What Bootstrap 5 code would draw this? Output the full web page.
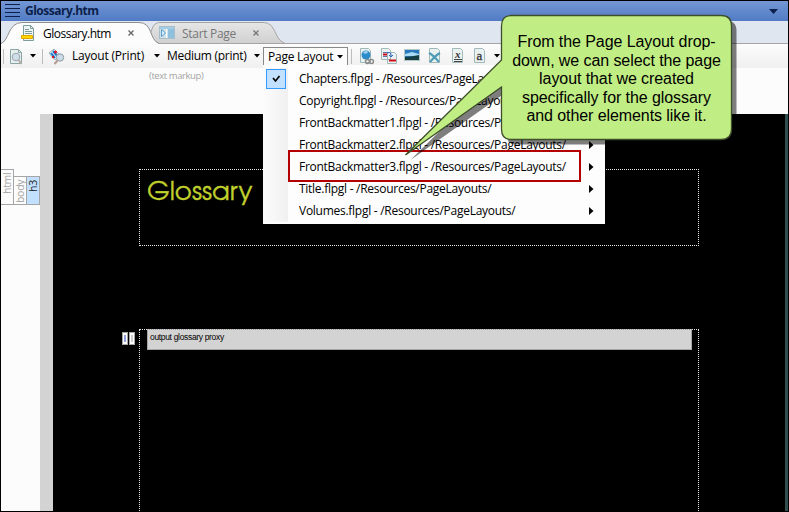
<!DOCTYPE html>
<html lang="en">
<head>
<meta charset="utf-8">
<meta name="viewport" content="width=device-width, initial-scale=1">
<title>Glossary.htm</title>
<link href="https://cdn.jsdelivr.net/npm/bootstrap@5.3.0/dist/css/bootstrap.min.css" rel="stylesheet">
<style>
body{width:789px;height:512px;overflow:hidden;font:12px/16px "Open Sans","Noto Sans",sans-serif;color:#000;background:#fcfcfc}
.app{width:789px;height:512px;border:1px solid #000}
svg{display:block;flex:none}
.t{white-space:nowrap;flex:none}
.titlebar{height:20px;background:linear-gradient(#7497d5,#507bc4);color:#0b1f4a;padding:0 10px 0 4px;font-weight:700}
.titlebar .t{margin-left:5px;letter-spacing:-.5px}
.tabs{height:23px;background:#dfe6f0;border-bottom:1px solid #a5a5a5}
.tabshape{left:0;top:0}
.doc-tab{height:23px}
.doc-tab .t{padding-top:2px}
.tab-a{width:150px;padding-left:20px}
.tab-a .t{margin-left:8px;letter-spacing:-.5px}
.tab-b{width:118px;padding-left:8px;color:#777}
.tab-b .t{margin-left:7px;letter-spacing:-.3px}
.tab-x{left:127px;top:9px}
.tab-b .tab-x{left:102px}
.toolbar{height:24px;background:linear-gradient(#fcfcfc,#f0f0f0);padding-left:2px;z-index:3}
.sep{width:1px;height:15px;background:#bdbdbd;flex:none}
.style-name{width:82px;margin-left:7px;letter-spacing:-.2px}
.medium-name{width:87px;margin-left:7px;letter-spacing:-.28px}
.drop{width:85px;height:21px;border:1px solid #888;border-bottom:0;background:#fcfcfc;margin-left:3px;padding-left:4px;margin-top:3px}
.drop .t{letter-spacing:-.25px;margin-top:-2px}
.drop svg{margin-top:-2px}
.layout-menu{left:262px;top:21px;width:342px;height:159px;background:#fdfdfd;padding:3px 0 0;z-index:2}
.gutter{width:25px;height:154px;background:linear-gradient(90deg,#fcfcfc,#f0f0f0)}
.item{height:22px;padding:0 11px}
.item .t{letter-spacing:-.27px}
.checkbox-on{left:3px;top:1px;width:20px;height:20px;background:#c2e0ff;border:1px solid #3399ff}
.pick{left:25px;top:85px;width:293px;height:32px;border:2px solid #b50000}
.callout{left:400px;top:-32px;z-index:5}
.callout-text{left:500px;top:-11px;width:231px;z-index:6;font:16px/18.5px "Liberation Sans",Arial,sans-serif;letter-spacing:-.08px;text-align:center}
.markup{height:46px;font-size:9.5px;letter-spacing:-.42px;color:#a4a4a4;padding-left:148px;line-height:15px}
.tags{width:39px;padding-top:55px}
.tag{writing-mode:vertical-rl;transform:rotate(180deg);border:1px solid #a5a5a5;color:#a4a4a4;font-size:10.5px;line-height:12px;width:14px;margin-right:-1px;text-align:right;padding-bottom:3px;letter-spacing:-.3px}
.tag-html{height:36px;margin-left:-1px;align-self:flex-start}
.tag-inner{height:29px}
.tag-on{background:#c2e0ff;color:#222}
.ruler{width:13px;background:#d3d3d3}
.paper{background:#000;border-right:3px solid #2f4f4f;padding-left:86px;height:397px}
.dotline{border:1px dotted #e8e8e8;width:560px}
.head-box{height:77px;margin-top:55px;padding:6px 0 0 7px;font:26px/34px "TeX Gyre Adventor","Century Gothic","Lato",sans-serif;color:#c0d02c;-webkit-text-stroke:.3px #c0d02c;overflow:hidden}
.out-box{height:190px;margin-top:83px;padding-left:7px;position:relative}
.proxy{width:545px;height:21px;margin-top:-1px;background:#d3d3d3;border:1px solid #a5a5a5;border-top:1px dotted #999;color:#000;font:8.5px/14px "Liberation Sans",sans-serif;letter-spacing:-.33px;padding-left:2px}
.mini{left:-18px;top:2px}
.mini span{width:6px;height:13px;background:#fff;border:1px solid #a5a5a5}
.mini i{display:block;width:2px;height:7px;margin:2px 1px;background:#91a0df}
.mini span+span{margin-left:1px}
.mini span+span i{background:#ccc}
</style>
<script src="https://cdn.jsdelivr.net/npm/bootstrap@5.3.0/dist/js/bootstrap.bundle.min.js"></script>
</head>
<body>
<div class="app d-flex flex-column overflow-hidden">
  <header class="titlebar d-flex align-items-center">
    <svg width="15" height="14"><path d="M0 .5h15M0 4.500h15M0 8.500h15M0 12.500h15" stroke="#0b1f4a"/></svg>
    <span class="t">Glossary.htm</span>
    <svg class="ms-auto" width="9" height="5"><path d="M0 0h9L4.500 5z" fill="#0b1f4a"/></svg>
  </header>

  <nav class="tabs d-flex position-relative">
    <svg class="tabshape position-absolute" width="290" height="23">
      <defs><linearGradient id="g" x1="0" x2="0" y1="0" y2="1"><stop stop-color="#e6e6e6"/><stop offset="1" stop-color="#cfcfcf"/></linearGradient></defs>
      <path d="M146 23L151 8Q153 1.500 159 1.500H262C276 1.500 272 18 284 22.500H150" fill="url(#g)" stroke="#a5a5a5"/>
      <path d="M0 22.500C8 20 7 1.500 21 1.500H138C152 1.500 148 19 158 22.500V24H0" fill="#fcfcfc" stroke="#8e8e8e"/>
    </svg>
    <div class="doc-tab tab-a d-flex align-items-center position-relative">
      <svg width="14" height="16"><path d="M2.500.5h7l3 3v12h-10z" fill="#eef4f4" stroke="#7d9c9c"/><path d="M9.500.5v3h3M4 4.500h4M4 6.500h7M4 8.500h7" fill="none" stroke="#7d9c9c"/><path d="M.5 10.500h11v3H.5z" fill="#ffd700" stroke="#e0a800"/></svg>
      <span class="t">Glossary.htm</span>
      <svg class="tab-x position-absolute" width="7" height="7"><path d="M.5.5l5 5M5.500.5l-5 5" stroke="#666" stroke-width="1.300"/></svg>
    </div>
    <div class="doc-tab tab-b d-flex align-items-center position-relative">
      <svg width="16" height="13"><rect x=".5" y=".5" width="15" height="12" fill="#cfe0e6" stroke="#a5c0cc"/><path d="M1 1h14v2H1z" fill="#a2cde4"/><path d="M9 3h6v9H9z" fill="#8fc1df"/><path d="M2.500 3.500l4 3.500-4 3.500z" fill="#d9efff" stroke="#5aa0cf"/><path d="M7.500 3v9" stroke="#fff"/></svg>
      <span class="t">Start Page</span>
      <svg class="tab-x position-absolute" width="7" height="7"><path d="M.5.5l5 5M5.500.5l-5 5" stroke="#777" stroke-width="1.300"/></svg>
    </div>
  </nav>

  <div class="toolbar d-flex align-items-center position-relative">
    <span class="sep"></span>
    <svg width="15" height="17" style="margin-left:5px"><path d="M1.500 1.500h8l3 3v11h-11z" fill="#e6eeee" stroke="#8aa5a5"/><path d="M9.500 1.500v3h3" fill="none" stroke="#8aa5a5"/><circle cx="7" cy="9" r="3.800" fill="#cfdeea" stroke="#9aa5ad"/><path d="M9.500 12l3 4" stroke="#b5aca6" stroke-width="2"/></svg>
    <svg width="6" height="4" style="margin-left:6px"><path d="M0 0h6L3 3.500z"/></svg>
    <span class="sep" style="margin-left:6px"></span>
    <svg width="17" height="17" style="margin-left:5px"><path d="M1 5l5-4 6 6-5 5z" fill="#e9f0f3" stroke="#9ab0b8"/><path d="M3 5l4 5M5 3l5 6" stroke="#117bd0" stroke-width="2"/><circle cx="7.500" cy="4" r="1.500" fill="#e0182b"/><circle cx="5" cy="9" r="1.200" fill="#e0182b"/><circle cx="12" cy="9.500" r="3.700" fill="#cbdce8" stroke="#919da5"/><path d="M9.500 12.500L6.500 16" stroke="#b59a91" stroke-width="2"/></svg>
    <span class="t style-name">Layout (Print)</span>
    <svg width="6" height="4"><path d="M0 0h6L3 3.500z"/></svg>
    <span class="t medium-name">Medium (print)</span>
    <svg width="6" height="4"><path d="M0 0h6L3 3.500z"/></svg>
    <div class="drop d-flex align-items-center flex-shrink-0">
      <span class="t">Page Layout</span>
      <svg width="6" height="4" class="ms-auto me-1"><path d="M0 0h6L3 3.500z"/></svg>
    </div>
    <span class="sep" style="margin-left:3px"></span>
    <svg width="142" height="20" style="margin-left:7px">
      <g fill="#e9f1f1" stroke="#a2b9b9"><path d="M1.500 2.500h8l2 2v12h-10zM22.500 2.500h7l2 2v9h-9zM28.500 6.500h7l2 2v9h-9zM70.500 2.500h8l2 2v12h-10zM93.500 2.500h8l2 2v12h-10zM115.500 2.500h8l2 2v12h-10z"/></g>
      <circle cx="7" cy="9" r="4.500" fill="#2c8bc9"/><path d="M4 7q3-4 5-1-1 3-5 1" fill="#9fd1ef"/>
      <g fill="none" stroke="#888" stroke-width="1.300"><circle cx="8.500" cy="15.500" r="2"/><circle cx="12.500" cy="15.500" r="2"/></g>
      <path d="M24 6.500h5M24 10.500h4" stroke="#5777aa"/><path d="M24 8.500h4M30 14.500h7" stroke="#d00d18" stroke-width="2"/><path d="M28 7q5-2 4 4m-2-2l2 2 2-2" fill="none" stroke="#3267cb"/>
      <rect x="45.500" y="3.500" width="15" height="11" fill="#2878be" stroke="#b5c7c7"/><path d="M46 8l7-2 7 2v2H46z" fill="#a8dcf4"/><path d="M46 11l6-.5 8-1.500v5H46z" fill="#173f43"/>
      <path d="M70 7q4 2 10 9M81 7q-4 2-10 9" stroke="#4e9bb6" stroke-width="2" fill="none"/>
      <path d="M95 13.500h8M95 15.500h8" stroke="#444"/>
      <g font-family="Liberation Serif" fill="#333"><text x="96" y="12" font-size="11" font-style="italic" font-weight="700">x</text><text x="117.500" y="14" font-size="13" stroke="#333" stroke-width=".3">a</text></g>
      <path d="M135 8h6l-3 3.500z"/>
    </svg>

    <div class="layout-menu position-absolute d-flex">
      <div class="gutter position-relative"><div class="checkbox-on position-absolute"><svg width="18" height="18"><path d="M6 8l2.500 3 4-5" fill="none" stroke="#000" stroke-width="1.700"/></svg></div></div>
      <div class="flex-grow-1">
        <div class="item d-flex align-items-center"><span class="t">Chapters.flpgl - /Resources/PageLayouts/</span></div>
        <div class="item d-flex align-items-center"><span class="t">Copyright.flpgl - /Resources/PageLayouts/</span></div>
        <div class="item d-flex align-items-center"><span class="t">FrontBackmatter1.flpgl - /Resources/PageLayouts/</span></div>
        <div class="item d-flex align-items-center"><span class="t">FrontBackmatter2.flpgl - /Resources/PageLayouts/</span><svg class="ms-auto" width="5" height="8"><path d="M0 0v8l4.500-4z"/></svg></div>
        <div class="item d-flex align-items-center"><span class="t">FrontBackmatter3.flpgl - /Resources/PageLayouts/</span><svg class="ms-auto" width="5" height="8"><path d="M0 0v8l4.500-4z"/></svg></div>
        <div class="item d-flex align-items-center"><span class="t">Title.flpgl - /Resources/PageLayouts/</span><svg class="ms-auto" width="5" height="8"><path d="M0 0v8l4.500-4z"/></svg></div>
        <div class="item d-flex align-items-center"><span class="t">Volumes.flpgl - /Resources/PageLayouts/</span><svg class="ms-auto" width="5" height="8"><path d="M0 0v8l4.500-4z"/></svg></div>
      </div>
      <div class="pick position-absolute"></div>
    </div>

    <svg class="callout position-absolute" width="345" height="160" viewBox="401 12 345 160">
      <defs><path id="bubble" d="M511 15.500H721Q731.500 15.500 731.500 26V129Q731.500 139.500 721 139.500H511Q501.500 139.500 501.500 129V87L405.500 155 501.500 60V26Q501.500 15.500 511 15.500Z"/></defs>
      <use href="#bubble" x="5" y="5" fill="#000" fill-opacity=".5"/>
      <use href="#bubble" fill="#c1ee84" stroke="#3e4d2a" stroke-width="1.300"/>
    </svg>
    <div class="callout-text position-absolute">From the Page Layout drop-<br>down, we can select the page<br>layout that we created<br>specifically for the glossary<br>and other elements like it.</div>
  </div>

  <main class="flex-grow-1 d-flex flex-column">
    <div class="markup">(text markup)</div>
    <div class="d-flex flex-grow-1">
      <div class="tags d-flex align-items-end align-self-start">
        <span class="tag tag-html">html</span>
        <span class="tag tag-inner">body</span>
        <span class="tag tag-inner tag-on">h3</span>
      </div>
      <div class="ruler"></div>
      <section class="paper flex-grow-1">
        <div class="dotline head-box">Glossary</div>
        <div class="dotline out-box">
          <div class="mini position-absolute d-flex"><span><i></i></span><span><i></i></span></div>
          <div class="proxy">output glossary proxy</div>
        </div>
      </section>
    </div>
  </main>
</div>
</body>
</html>
